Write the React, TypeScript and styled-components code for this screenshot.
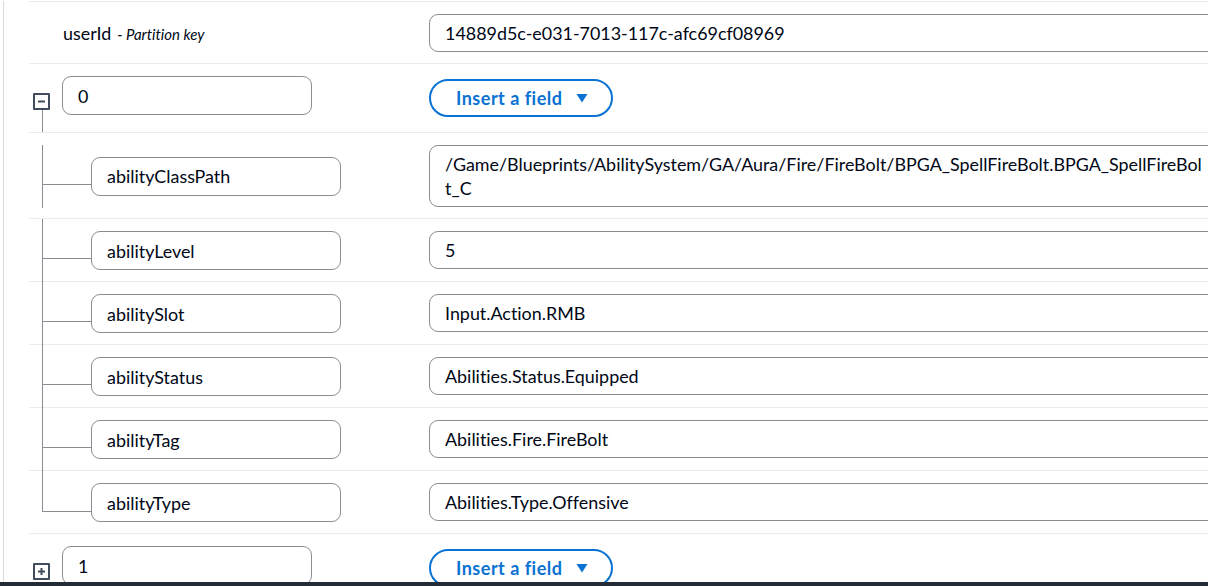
import React from "react";
import styled, { createGlobalStyle } from "styled-components";

const GlobalStyle = createGlobalStyle`
  html, body {
    margin: 0;
    padding: 0;
    background: #ffffff;
    overflow: hidden;
  }
  body {
    font-family: Lato, "Open Sans", Arial, sans-serif;
    font-variant-ligatures: none;
    color: #000716;
  }
`;

const Page = styled.div`
  width: 1208px;
  height: 586px;
  overflow: hidden;
  position: relative;
`;

const Frame = styled.div`
  margin-left: 3px;
  border-left: 1px solid #d5dbdf;
  min-height: 586px;
  padding-left: 25px;
`;

const List = styled.div`
  width: 1500px;
  margin-top: 1px;
  border-top: 1px solid #e9ebed;
`;

const Row = styled.div<{ $pad?: string }>`
  display: grid;
  grid-template-columns: 400px 1fr;
  border-bottom: 1px solid #e9ebed;
  padding: ${(p) => p.$pad ?? "12px 0 11px"};
`;

const KeyCell = styled.div<{ $indent: number }>`
  display: flex;
  align-items: center;
  padding-left: ${(p) => p.$indent}px;
`;

const GroupKeyCell = styled.div`
  display: flex;
  align-items: flex-start;
  padding-left: 4px;
  gap: 12px;
`;

const ValueCell = styled.div`
  display: flex;
  align-items: flex-start;
`;

const Label = styled.span`
  font-size: 17.9px;
  line-height: 24px;
  margin-left: 34px;
`;

const Hint = styled.span`
  font-size: 15px;
  font-style: italic;
  margin-left: 6px;
`;

const KeyInput = styled.div`
  box-sizing: border-box;
  width: 250px;
  height: 39px;
  border: 1px solid #8c8c94;
  border-radius: 9px;
  padding: 0 15px;
  display: flex;
  align-items: center;
  font-size: 17.9px;
  background: #fff;
`;

const ValueInput = styled.div`
  box-sizing: border-box;
  width: 790px;
  min-height: 38px;
  border: 1px solid #8c8c94;
  border-radius: 9px;
  padding: 6px 13px 6px 15px;
  font-size: 17.9px;
  line-height: 24px;
  word-break: break-all;
  background: #fff;
`;

const ToggleColumn = styled.div`
  align-self: stretch;
  display: flex;
  flex-direction: column;
  align-items: center;
  width: 17px;
  padding-top: 17px;
  margin-bottom: -15px;
`;

const ToggleBox = styled.div`
  box-sizing: border-box;
  width: 17px;
  height: 17px;
  border: 2px solid #414d5c;
  border-radius: 1px;
  display: flex;
  align-items: center;
  justify-content: center;
  background: #fff;
`;

const TreeTail = styled.div`
  flex: 1;
  width: 0;
  border-left: 1px solid #8c8c94;
  margin-left: 1px;
`;

const Connector = styled.div`
  width: 49px;
  height: 63px;
  margin: -12px 0;
  display: flex;
  flex-direction: column;
  flex-shrink: 0;
`;

const Elbow = styled.div<{ $last?: boolean }>`
  box-sizing: border-box;
  height: ${(p) => (p.$last ? "41px" : "40px")};
  border-left: 1px solid #8c8c94;
  border-bottom: 1px solid #8c8c94;
`;

const Stem = styled.div<{ $last?: boolean }>`
  flex: 1;
  border-left: ${(p) => (p.$last ? "none" : "1px solid #8c8c94")};
`;

const InsertButton = styled.button`
  box-sizing: border-box;
  margin-top: 3px;
  width: 184px;
  height: 38px;
  border: 2px solid #0972d3;
  border-radius: 20px;
  background: #fff;
  color: #0972d3;
  font-family: inherit;
  font-size: 18px;
  letter-spacing: 0.5px;
  font-weight: 700;
  padding: 0 0 0 25px;
  display: flex;
  align-items: center;
  gap: 13px;
  cursor: pointer;
`;

const BottomBar = styled.div`
  position: absolute;
  left: 0;
  right: 0;
  bottom: 0;
  height: 4px;
  background: #232b37;
`;

type Field = { key: string; value: string };

const fields: Field[] = [
  {
    key: "abilityClassPath",
    value:
      "/Game/Blueprints/AbilitySystem/GA/Aura/Fire/FireBolt/BPGA_SpellFireBolt.BPGA_SpellFireBolt_C",
  },
  { key: "abilityLevel", value: "5" },
  { key: "abilitySlot", value: "Input.Action.RMB" },
  { key: "abilityStatus", value: "Abilities.Status.Equipped" },
  { key: "abilityTag", value: "Abilities.Fire.FireBolt" },
  { key: "abilityType", value: "Abilities.Type.Offensive" },
];

function ToggleIcon({ open }: { open: boolean }) {
  return (
    <ToggleBox>
      <svg width="9" height="9" viewBox="0 0 9 9">
        <rect x="1" y="3.5" width="7" height="2" fill="#414d5c" />
        {!open && <rect x="3.5" y="1" width="2" height="7" fill="#414d5c" />}
      </svg>
    </ToggleBox>
  );
}

function Caret() {
  return (
    <svg width="12" height="10" viewBox="0 0 12 10">
      <path d="M0.5 1 L11.5 1 L6 9.5 Z" fill="#0972d3" />
    </svg>
  );
}

function GroupRow({ index, open }: { index: string; open: boolean }) {
  return (
    <Row $pad="12px 0 15px">
      <GroupKeyCell>
        <ToggleColumn>
          <ToggleIcon open={open} />
          {open && <TreeTail />}
        </ToggleColumn>
        <KeyInput>{index}</KeyInput>
      </GroupKeyCell>
      <ValueCell>
        <InsertButton>
          Insert a field
          <Caret />
        </InsertButton>
      </ValueCell>
    </Row>
  );
}

export default function App() {
  return (
    <>
      <GlobalStyle />
      <Page>
        <Frame>
          <List>
            <Row>
              <KeyCell $indent={0}>
                <Label>
                  userId<Hint>- Partition key</Hint>
                </Label>
              </KeyCell>
              <ValueCell>
                <ValueInput>14889d5c-e031-7013-117c-afc69cf08969</ValueInput>
              </ValueCell>
            </Row>
            <GroupRow index="0" open />
            {fields.map((f, i) => {
              const last = i === fields.length - 1;
              return (
                <Row key={f.key}>
                  <KeyCell $indent={13}>
                    <Connector>
                      <Elbow $last={last} />
                      <Stem $last={last} />
                    </Connector>
                    <KeyInput>{f.key}</KeyInput>
                  </KeyCell>
                  <ValueCell>
                    <ValueInput>{f.value}</ValueInput>
                  </ValueCell>
                </Row>
              );
            })}
            <GroupRow index="1" open={false} />
          </List>
        </Frame>
        <BottomBar />
      </Page>
    </>
  );
}
